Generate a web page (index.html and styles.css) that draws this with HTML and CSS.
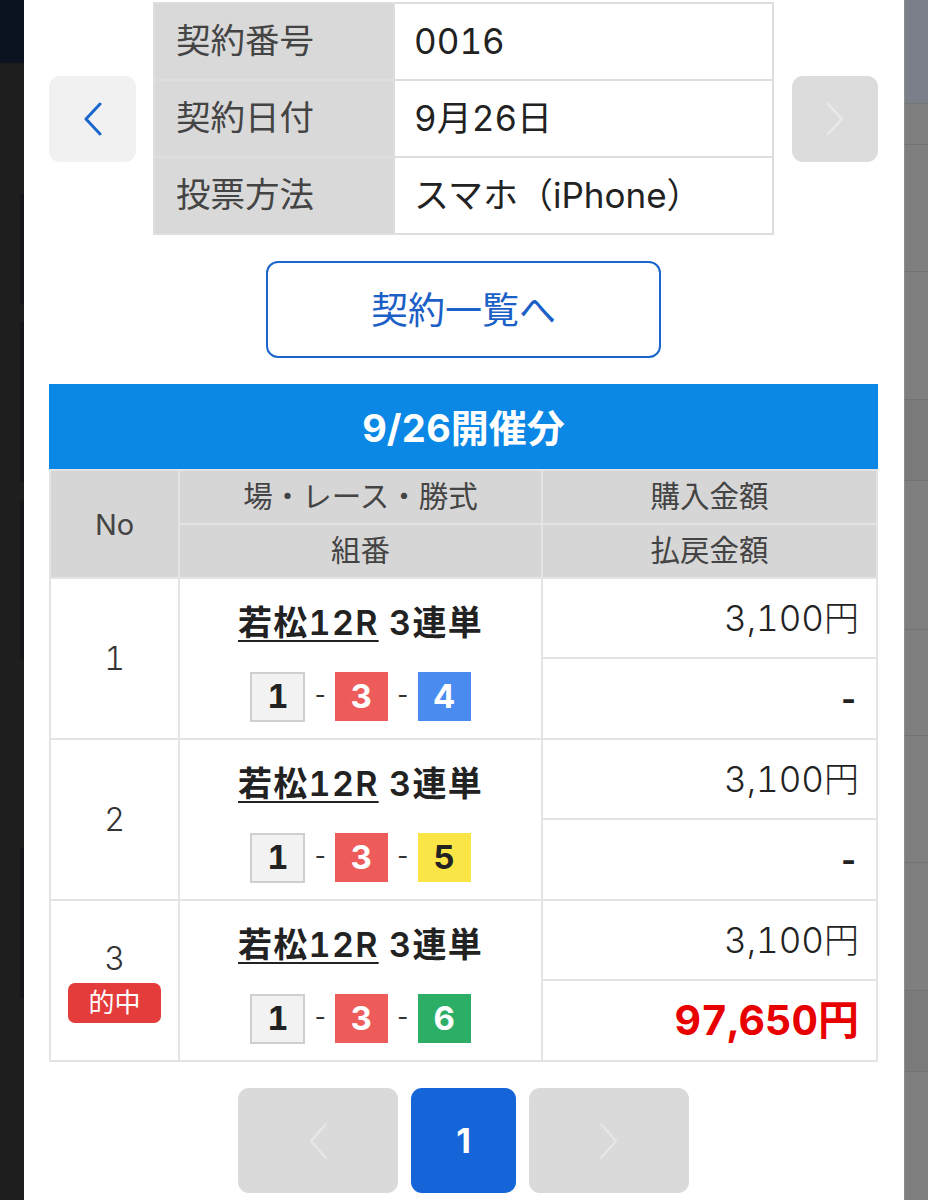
FILE: index.html
```html
<!DOCTYPE html>
<html lang="ja">
<head>
<meta charset="utf-8">
<title>契約詳細</title>
<link rel="stylesheet" href="styles.css">
</head>
<body>
<div class="screen">
  <aside class="side-left">
    <div class="sl-top"></div>
    <div class="sl-body">
      <div class="sl-tab t1"></div>
      <div class="sl-tab t2"></div>
      <div class="sl-tab t3"></div>
      <div class="sl-tab t4"></div>
    </div>
  </aside>

  <main class="panel">
    <section class="contract">
      <button class="nav-btn nav-prev" type="button" aria-label="前へ">
        <svg width="20" height="34" viewBox="0 0 20 34"><path d="M17 2 L3 17 L17 32" fill="none" stroke="#1b66cc" stroke-width="3" stroke-linecap="round" stroke-linejoin="round"/></svg>
      </button>
      <table class="info">
        <tr><th>契約番号</th><td>0016</td></tr>
        <tr><th>契約日付</th><td>9月26日</td></tr>
        <tr><th>投票方法</th><td>スマホ（iPhone）</td></tr>
      </table>
      <button class="nav-btn nav-next" type="button" aria-label="次へ">
        <svg width="20" height="34" viewBox="0 0 20 34"><path d="M3 2 L17 17 L3 32" fill="none" stroke="#e9e9e9" stroke-width="2.5" stroke-linecap="round" stroke-linejoin="round"/></svg>
      </button>
    </section>

    <div class="list-wrap">
      <a class="list-btn" href="#">契約一覧へ</a>
    </div>

    <section class="results">
      <h2 class="day-head">9/26開催分</h2>
      <table class="bets">
        <colgroup><col class="c1"><col class="c2"><col class="c3"></colgroup>
        <thead>
          <tr><th rowspan="2" class="h-no">No</th><th class="h">場・レース・勝式</th><th class="h">購入金額</th></tr>
          <tr><th class="h">組番</th><th class="h">払戻金額</th></tr>
        </thead>
        <tbody>
          <tr>
            <td rowspan="2" class="no"><div class="no-in"><span>1</span></div></td>
            <td rowspan="2" class="race">
              <div class="race-in">
                <div class="race-title"><span class="venue">若松12R</span> 3連単</div>
                <div class="combo"><span class="bx b1">1</span><span class="dash">-</span><span class="bx b3">3</span><span class="dash">-</span><span class="bx b4">4</span></div>
              </div>
            </td>
            <td class="amt">3,100円</td>
          </tr>
          <tr><td class="amt pay"><span class="nil">-</span></td></tr>

          <tr>
            <td rowspan="2" class="no"><div class="no-in"><span>2</span></div></td>
            <td rowspan="2" class="race">
              <div class="race-in">
                <div class="race-title"><span class="venue">若松12R</span> 3連単</div>
                <div class="combo"><span class="bx b1">1</span><span class="dash">-</span><span class="bx b3">3</span><span class="dash">-</span><span class="bx b5">5</span></div>
              </div>
            </td>
            <td class="amt">3,100円</td>
          </tr>
          <tr><td class="amt pay"><span class="nil">-</span></td></tr>

          <tr>
            <td rowspan="2" class="no"><div class="no-in"><span>3</span><span class="hit">的中</span></div></td>
            <td rowspan="2" class="race">
              <div class="race-in">
                <div class="race-title"><span class="venue">若松12R</span> 3連単</div>
                <div class="combo"><span class="bx b1">1</span><span class="dash">-</span><span class="bx b3">3</span><span class="dash">-</span><span class="bx b6">6</span></div>
              </div>
            </td>
            <td class="amt">3,100円</td>
          </tr>
          <tr><td class="amt pay"><span class="win">97,650円</span></td></tr>
        </tbody>
      </table>
    </section>

    <nav class="pager">
      <button class="pg pg-side" type="button" aria-label="前のページ">
        <svg width="22" height="40" viewBox="0 0 22 40"><path d="M19 3 L4 20 L19 37" fill="none" stroke="#e6e6e6" stroke-width="2.5" stroke-linecap="round" stroke-linejoin="round"/></svg>
      </button>
      <button class="pg pg-cur" type="button">1</button>
      <button class="pg pg-side" type="button" aria-label="次のページ">
        <svg width="22" height="40" viewBox="0 0 22 40"><path d="M3 3 L18 20 L3 37" fill="none" stroke="#e6e6e6" stroke-width="2.5" stroke-linecap="round" stroke-linejoin="round"/></svg>
      </button>
    </nav>
  </main>

  <aside class="side-right">
    <div class="sr-top"></div>
    <div class="sr-row r1"></div>
    <div class="sr-row r2"></div>
    <div class="sr-row r3"></div>
    <div class="sr-row r4"></div>
    <div class="sr-row r5"></div>
    <div class="sr-row r6"></div>
    <div class="sr-row r7"></div>
    <div class="sr-row r8"></div>
    <div class="sr-row r9"></div>
  </aside>
</div>
</body>
</html>
```

FILE: styles.css
```css
html, body {
  margin: 0;
  padding: 0;
  background: #1e1e1e;
}
body {
  font-family: Inter, "Noto Sans CJK JP", "Noto Sans", sans-serif;
  font-variant-numeric: tabular-nums;
  color: #222;
}
button {
  font-family: inherit;
}
.screen {
  display: flex;
  width: 928px;
  height: 1200px;
  overflow: hidden;
}

/* side strips */
.side-left {
  width: 24px;
  flex: none;
  display: flex;
  flex-direction: column;
  background: #1e1e1e;
}
.sl-top {
  height: 63px;
  background: #0b1220;
}
.sl-body {
  flex: 1;
  display: flex;
  flex-direction: column;
  align-items: flex-end;
  border-top: 1px solid #1b1b1b;
  padding-top: 130px;
  gap: 18px;
}
.sl-tab {
  width: 4px;
  background: #15171d;
  border-radius: 4px 0 0 4px;
}
.t1 { height: 110px; }
.t2 { height: 160px; }
.t3 { height: 160px; }
.t4 { height: 150px; margin-top: 170px; }

.side-right {
  width: 24px;
  flex: none;
  background: #7f7f7f;
  border-left: 1px solid #8c8c8c;
  box-sizing: border-box;
  display: flex;
  flex-direction: column;
}
.sr-top { height: 103px; background: #7b7f89; border-bottom: 1px solid #757575; }
.sr-row { border-bottom: 1px solid #737373; }
.r1 { height: 40px; }
.r2 { height: 126px; }
.r3 { height: 127px; }
.r4 { height: 80px; background: #7a7a7a; }
.r5 { height: 148px; }
.r6 { height: 105px; }
.r7 { height: 126px; }
.r8 { height: 127px; }
.r9 { height: 80px; background: #7a7a7a; }

/* panel */
.panel {
  width: 880px;
  flex: none;
  box-sizing: border-box;
  background: #fff;
  padding: 2px 26px 0 25px;
}

/* contract info */
.contract {
  display: flex;
  align-items: center;
  gap: 17px;
}
.nav-btn {
  width: 87px;
  height: 86px;
  flex: none;
  border: 0;
  border-radius: 11px;
  padding: 0;
  display: flex;
  align-items: center;
  justify-content: center;
}
.nav-prev { background: #f1f1f1; }
.nav-next { background: #dcdcdc; width: 86px; margin-left: 1px; }

.info {
  width: 621px;
  flex: none;
  border-collapse: separate;
  border-spacing: 2px;
  background: #dedede;
  table-layout: fixed;
}
.info th, .info td {
  height: 75px;
  padding: 0;
  font-weight: 400;
  text-align: left;
  vertical-align: middle;
  line-height: 1;
}
.info th {
  width: 238px;
  background: #d9d9d9;
  color: #444;
  font-size: 34.5px;
  padding-left: 21px;
  box-sizing: border-box;
}
.info td {
  background: #fff;
  color: #222;
  font-size: 35px;
  padding-left: 19px;
}

/* list button */
.list-wrap {
  display: flex;
  justify-content: center;
  margin-top: 26px;
}
.list-btn {
  width: 395px;
  height: 97px;
  box-sizing: border-box;
  border: 2px solid #1b66cc;
  border-radius: 12px;
  display: flex;
  align-items: center;
  justify-content: center;
  color: #1a60c6;
  font-size: 37px;
  text-decoration: none;
  padding-bottom: 4px;
}

/* results */
.results { margin-top: 26px; }
.day-head {
  margin: 0;
  height: 85px;
  background: #0b88e6;
  color: #fff;
  font-size: 38px;
  font-weight: 700;
  display: flex;
  align-items: center;
  justify-content: center;
  padding-bottom: 2px;
  box-sizing: border-box;
}
.bets {
  width: 829px;
  border-collapse: separate;
  border-spacing: 2px;
  background: #e4e4e4;
  table-layout: fixed;
}
.bets col.c1 { width: 127px; }
.bets col.c2 { width: 361px; }
.bets col.c3 { width: 333px; }
.bets th, .bets td { padding: 0; }
.bets thead th {
  background: #d6d6d6;
  color: #444;
  font-size: 29.5px;
  font-weight: 400;
  height: 52px;
  text-align: center;
  vertical-align: middle;
  line-height: 1;
}
.bets thead th.h-no { font-size: 29px; }
.bets tbody td {
  background: #fff;
  vertical-align: middle;
}
.no { text-align: center; }
.no-in {
  display: flex;
  flex-direction: column;
  align-items: center;
  gap: 4px;
  font-size: 32px;
  font-weight: 300;
  color: #333;
  line-height: 40px;
}
.hit {
  width: 93px;
  height: 40px;
  border-radius: 7px;
  background: #e43b3b;
  color: #fff;
  font-size: 26px;
  font-weight: 400;
  line-height: 40px;
  text-align: center;
}

.race { text-align: center; }
.race-in {
  display: flex;
  flex-direction: column;
  align-items: center;
  gap: 29px;
  padding-top: 7px;
}
.race-title {
  font-size: 34px;
  font-weight: 600;
  color: #222;
  line-height: 40px;
  letter-spacing: 1.3px;
}
.venue {
  text-decoration: underline;
  text-decoration-thickness: 2px;
  text-underline-offset: 5px;
}
.combo {
  display: flex;
  align-items: center;
  gap: 7px;
}
.bx {
  width: 53px;
  height: 49px;
  box-sizing: border-box;
  display: flex;
  align-items: center;
  justify-content: center;
  font-size: 33px;
  font-weight: 700;
  color: #fff;
  line-height: 1;
}
.b1 { width: 55px; height: 50px; background: #f2f2f2; border: 2px solid #cfcfcf; color: #222; }
.b3 { background: #ee5b5b; }
.b4 { background: #4a8bef; }
.b5 { background: #fbe446; color: #222; }
.b6 { background: #2dae67; }
.dash {
  font-size: 24px;
  color: #333;
  line-height: 1;
  padding-bottom: 4px;
}

.amt {
  height: 78px;
  text-align: right;
  padding-right: 17px !important;
  font-size: 35px;
  font-weight: 300;
  color: #222;
  line-height: 1;
}
.pay { height: 79px; }
.nil {
  font-weight: 700;
  font-size: 32px;
}
.win {
  color: #e80000;
  font-weight: 700;
  font-size: 41px;
}

/* pager */
.pager {
  display: flex;
  justify-content: center;
  gap: 13px;
  margin-top: 26px;
}
.pg {
  height: 105px;
  border: 0;
  border-radius: 11px;
  padding: 0;
  display: flex;
  align-items: center;
  justify-content: center;
}
.pg-side { width: 160px; background: #dadada; }
.pg-cur {
  width: 105px;
  background: #1565d8;
  color: #fff;
  font-size: 34px;
  font-weight: 700;
}
```
